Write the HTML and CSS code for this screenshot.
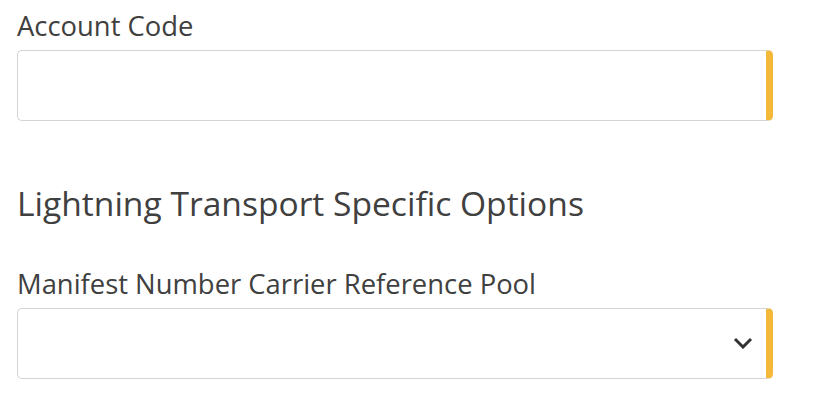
FILE: index.html
```html
<!DOCTYPE html>
<html lang="en">
<head>
<meta charset="utf-8">
<link rel="stylesheet" href="styles.css">
</head>
<body>
<form class="form">
  <div class="field">
    <label class="label" for="acct">Account Code</label>
    <input class="control" id="acct" type="text">
  </div>
  <h2 class="section-title">Lightning Transport Specific Options</h2>
  <div class="field">
    <label class="label" for="pool">Manifest Number Carrier Reference Pool</label>
    <div class="select-wrap">
      <select class="control select" id="pool"><option></option></select>
      <svg class="chevron" width="20" height="12" viewBox="0 0 20 12"><path d="M2 2 L10 10 L18 2" fill="none" stroke="#333" stroke-width="3"/></svg>
    </div>
  </div>
</form>
</body>
</html>
```
FILE: styles.css
```css
html, body {
  margin: 0;
  padding: 0;
  background: #fff;
}
body {
  font-family: "Open Sans", "Noto Sans", sans-serif;
  color: #404040;
}
.form {
  width: 756px;
  padding: 8px 0 0 17px;
}
.field {
  display: flex;
  flex-direction: column;
}
.label {
  font-size: 27.4px;
  line-height: 36px;
  color: #404040;
  margin-bottom: 6px;
}
.control {
  box-sizing: border-box;
  width: 100%;
  height: 71px;
  margin: 0;
  border: 1.5px solid #d4d4d4;
  border-right: 7.5px solid #f4b93b;
  border-radius: 5px;
  background: #fff;
  font: inherit;
  appearance: none;
  -webkit-appearance: none;
  outline: none;
}
.section-title {
  font-size: 33.6px;
  font-weight: 400;
  line-height: 48px;
  margin: 58px 0 39px;
  color: #404040;
}
.select-wrap {
  position: relative;
}
.chevron {
  position: absolute;
  right: 20px;
  top: 29px;
}
```
